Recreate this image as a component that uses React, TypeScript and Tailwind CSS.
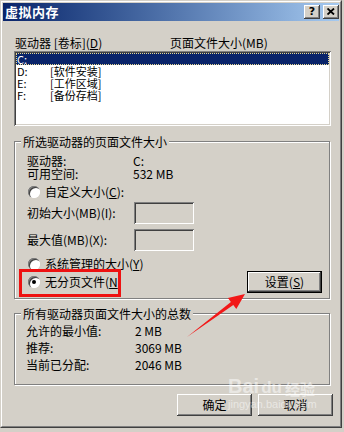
import type { ReactNode } from "react";

const raised = "shadow-[inset_-1px_-1px_0_#404040,inset_1px_1px_0_#ffffff,inset_-2px_-2px_0_#808080]";
const sunken = "shadow-[inset_1px_1px_0_#808080,inset_-1px_-1px_0_#ffffff,inset_2px_2px_0_#404040,inset_-2px_-2px_0_#d4d0c8]";

function Group({ title, className, children }: { title: string; className: string; children: ReactNode }) {
    return (
        <div className={"relative border border-[#808080] shadow-[inset_1px_1px_0_#ffffff,1px_1px_0_#ffffff] " + className}>
            <span className="absolute left-[6px] -top-[7px] bg-[#d4d0c8] px-[2px] leading-[14px] whitespace-nowrap">{title}</span>
            {children}
        </div>
    );
}

function Radio({ checked, label }: { checked?: boolean; label: ReactNode }) {
    return (
        <div className="flex items-center gap-[5px] h-[14px]">
            <div className="w-[12px] h-[12px] rounded-full bg-white flex items-center justify-center shadow-[inset_1px_1px_0_#808080,inset_2px_2px_0_#404040,inset_-1px_-1px_0_#ffffff]">
                {checked && <div className="w-[4px] h-[4px] rounded-full bg-black" />}
            </div>
            <span className="leading-[14px] whitespace-nowrap">{label}</span>
        </div>
    );
}

function Field({ label }: { label: string }) {
    return (
        <div className="flex items-center h-[22px]">
            <span className="w-[107px] leading-[14px] whitespace-nowrap">{label}</span>
            <div className={"w-[60px] h-[22px] bg-[#d4d0c8] " + sunken} />
        </div>
    );
}

export default function App() {
    const drives = [
        { d: "C:", name: "" },
        { d: "D:", name: "[软件安装]" },
        { d: "E:", name: "[工作区域]" },
        { d: "F:", name: "[备份存档]" },
    ];

    return (
        <div className="relative w-[344px] h-[432px] overflow-hidden bg-[#d4d0c8] text-black text-[12px] font-['Noto_Sans_CJK_SC',sans-serif]">
            <div className="w-[342px] h-[428px] border border-t-[#d4d0c8] border-l-[#d4d0c8] border-r-[#404040] border-b-[#404040]">
                <div className="w-full h-full border border-t-white border-l-white border-r-[#808080] border-b-[#808080] p-[1px] flex flex-col">

                    {/* title bar */}
                    <div className="h-[18px] flex items-center justify-between bg-gradient-to-r from-[#0a246a] to-[#a6caf0] pl-[2px]">
                        <span className="text-white font-bold text-[13px] leading-[14px] tracking-[0.5px]">虚拟内存</span>
                        <div className="flex gap-[3px]">
                            <div className={"w-[16px] h-[14px] bg-[#d4d0c8] flex items-center justify-center font-bold text-[11px] leading-none " + raised}>
                                <span className="font-['DejaVu_Sans',sans-serif] -mt-[1px]">?</span>
                            </div>
                            <div className={"w-[16px] h-[14px] bg-[#d4d0c8] flex items-center justify-center " + raised}>
                                <svg width="8" height="7" viewBox="0 0 8 7" className="-mt-[1px]">
                                    <path d="M0.5 0.5 L7 6.5 M7 0.5 L0.5 6.5" stroke="#000" strokeWidth="1.8" />
                                </svg>
                            </div>
                        </div>
                    </div>

                    {/* body */}
                    <div className="flex-1 pl-[11px] flex flex-col">
                        <div className="mt-[15px] flex leading-[14px] pl-[1px]">
                            <span className="w-[155px]">驱动器 [卷标](<u>D</u>)</span>
                            <span>页面文件大小(MB)</span>
                        </div>

                        <div className={"mt-[1px] w-[317px] h-[75px] bg-white p-[2px] " + sunken}>
                            {drives.map((row, i) => (
                                <div
                                    key={row.d}
                                    className={
                                        i === 0
                                            ? "h-[12px] leading-[12px] text-[11px] flex bg-[#0a246a] text-white outline outline-1 -outline-offset-1 outline-dotted outline-[#e8d890] pl-[1px]"
                                            : "h-[12px] leading-[12px] text-[11px] flex pl-[1px]"
                                    }
                                >
                                    <span className="w-[33px]">{row.d}</span>
                                    <span>{row.name}</span>
                                </div>
                            ))}
                        </div>

                        <Group title="所选驱动器的页面文件大小" className="mt-[15px] w-[316px] h-[158px] pl-[12px] pr-[7px] pt-[12px]">
                            <div className="flex flex-col">
                                <div className="flex leading-[13px]">
                                    <span className="w-[106px]">驱动器:</span>
                                    <span>C:</span>
                                </div>
                                <div className="flex leading-[13px]">
                                    <span className="w-[106px]">可用空间:</span>
                                    <span>532 MB</span>
                                </div>
                                <div className="mt-[5px] pl-[1px]">
                                    <Radio label={<>自定义大小(<u>C</u>):</>} />
                                </div>
                                <div className="mt-[3px]">
                                    <Field label="初始大小(MB)(I):" />
                                </div>
                                <div className="mt-[5px]">
                                    <Field label="最大值(MB)(X):" />
                                </div>
                                <div className="mt-[6px] pl-[1px]">
                                    <Radio label={<>系统管理的大小(<u>Y</u>)</>} />
                                </div>
                                <div className="flex items-center justify-between h-[22px] pl-[1px]">
                                    <Radio checked label={<>无分页文件(<u>N</u></>} />
                                    <div className={"w-[75px] h-[22px] border border-black flex items-center justify-center leading-[14px] " + raised}>
                                        设置(<u>S</u>)
                                    </div>
                                </div>
                            </div>
                        </Group>

                        <Group title="所有驱动器页面文件大小的总数" className="mt-[14px] w-[316px] h-[72px] pl-[11px] pt-[10px]">
                            <div className="flex flex-col gap-[3px] leading-[14px]">
                                <div className="flex"><span className="w-[109px]">允许的最小值:</span><span>2 MB</span></div>
                                <div className="flex"><span className="w-[109px]">推荐:</span><span>3069 MB</span></div>
                                <div className="flex"><span className="w-[109px]">当前已分配:</span><span>2046 MB</span></div>
                            </div>
                        </Group>

                        <div className="mt-[9px] w-[319px] flex justify-end gap-[6px]">
                            <div className={"w-[75px] h-[22px] flex items-center justify-center leading-[14px] " + raised}>确定</div>
                            <div className={"w-[75px] h-[22px] flex items-center justify-center leading-[14px] " + raised}>取消</div>
                        </div>
                    </div>
                </div>
            </div>

            {/* annotation */}
            <div className="absolute left-[19px] top-[269px] w-[102px] h-[28px] border-[3px] border-[#ee1111]" />
            <svg className="absolute left-0 top-0 pointer-events-none" width="344" height="432">
                <polygon points="187,337 233.3,305.1 236.3,309.1 245,294 227.9,297.9 230.9,301.9" fill="#f21818" />
            </svg>

            {/* watermark */}
            <div className="absolute left-[228px] top-[376px] pointer-events-none text-white/50 leading-none">
                <div className="flex items-end font-['Liberation_Sans',sans-serif] font-bold">
                    <span className="text-[20px]">Bai</span>
                    <span className="text-[17px] ml-[2px]">du</span>
                    <span className="text-[15px] ml-[3px] font-['Noto_Sans_CJK_SC',sans-serif]">经验</span>
                </div>
                <div className="text-[11px] mt-[3px] font-['Liberation_Sans',sans-serif]">jingyan.baidu.com</div>
            </div>
        </div>
    );
}
